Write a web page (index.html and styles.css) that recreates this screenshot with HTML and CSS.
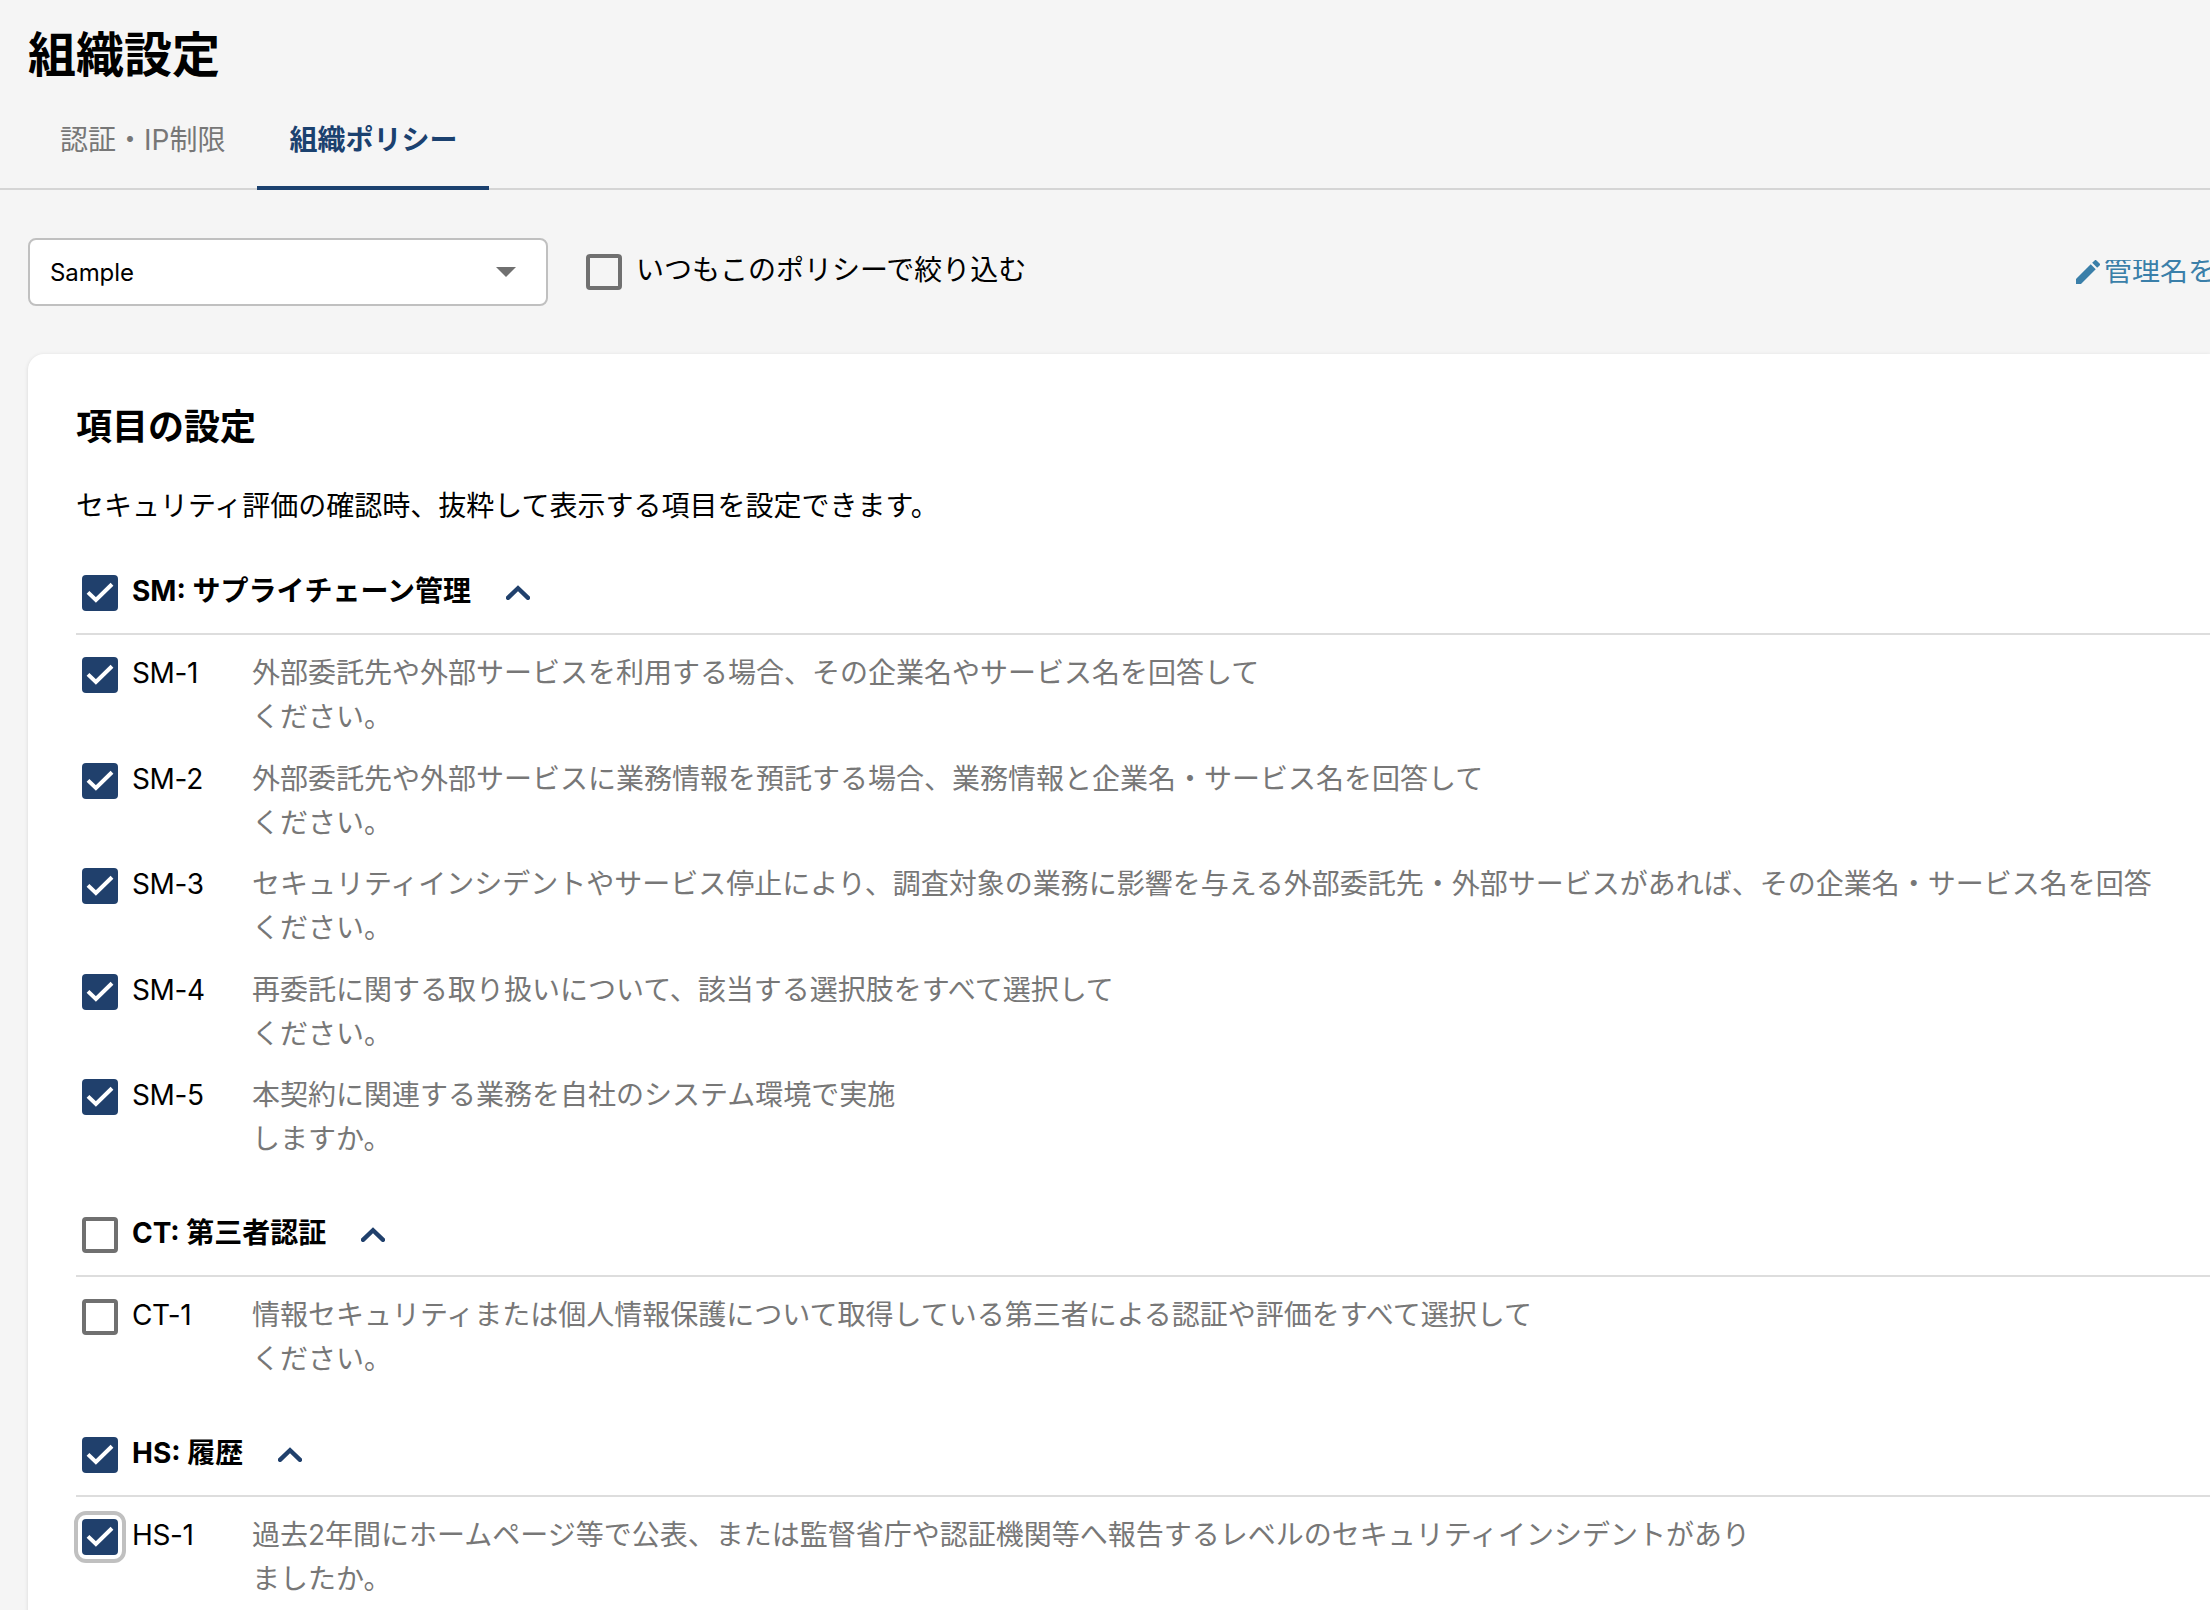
FILE: index.html
```html
<!DOCTYPE html>
<html lang="ja">
<head>
<meta charset="utf-8">
<title>組織設定</title>
<link rel="stylesheet" href="styles.css">
</head>
<body>
<svg class="defs" width="0" height="0">
  <symbol id="check" viewBox="0 0 36 36"><path d="M6 17.4l7.9 7.6L30 9.2" fill="none" stroke="#fff" stroke-width="4"/></symbol>
  <symbol id="chevron" viewBox="0 0 24 15"><path d="M2 12.8L12 3.2l10 9.6" fill="none" stroke="#20406c" stroke-width="4.4" stroke-linecap="round"/></symbol>
</svg>
<main class="page">
  <h1 class="page-title">組織設定</h1>
  <nav class="tabs">
    <a class="tab">認証・IP制限</a>
    <a class="tab tab-active">組織ポリシー</a>
  </nav>
  <div class="toolbar">
    <div class="select"><span class="select-value">Sample</span><svg width="20" height="10" viewBox="0 0 20 10"><path d="M0 0h20L10 10z" fill="#707070"/></svg></div>
    <label class="filter"><span class="box"></span><span class="filter-text">いつもこのポリシーで絞り込む</span></label>
    <a class="rename"><svg width="24" height="24" viewBox="3 3 18 18"><path fill="#3a7fa9" d="M3 17.25V21h3.75L17.81 9.94l-3.75-3.75L3 17.25zM20.71 7.04a1 1 0 0 0 0-1.41l-2.34-2.34a1 1 0 0 0-1.41 0l-1.83 1.83 3.75 3.75 1.83-1.83z"/></svg><span>管理名を</span></a>
  </div>
  <section class="card">
    <h2 class="card-title">項目の設定</h2>
    <p class="card-text">セキュリティ評価の確認時、抜粋して表示する項目を設定できます。</p>

    <div class="group">
      <header class="group-head"><span class="box checked"><svg><use href="#check"/></svg></span><h3 class="group-name">SM: サプライチェーン管理</h3><svg class="chevron"><use href="#chevron"/></svg></header>
      <div class="item"><span class="box checked"><svg><use href="#check"/></svg></span><span class="code">SM-1</span><p class="question">外部委託先や外部サービスを利用する場合、その企業名やサービス名を回答して<br>ください。</p></div>
      <div class="item"><span class="box checked"><svg><use href="#check"/></svg></span><span class="code">SM-2</span><p class="question">外部委託先や外部サービスに業務情報を預託する場合、業務情報と企業名・サービス名を回答して<br>ください。</p></div>
      <div class="item"><span class="box checked"><svg><use href="#check"/></svg></span><span class="code">SM-3</span><p class="question">セキュリティインシデントやサービス停止により、調査対象の業務に影響を与える外部委託先・外部サービスがあれば、その企業名・サービス名を回答<br>ください。</p></div>
      <div class="item"><span class="box checked"><svg><use href="#check"/></svg></span><span class="code">SM-4</span><p class="question">再委託に関する取り扱いについて、該当する選択肢をすべて選択して<br>ください。</p></div>
      <div class="item"><span class="box checked"><svg><use href="#check"/></svg></span><span class="code">SM-5</span><p class="question">本契約に関連する業務を自社のシステム環境で実施<br>しますか。</p></div>
    </div>

    <div class="group">
      <header class="group-head"><span class="box"></span><h3 class="group-name">CT: 第三者認証</h3><svg class="chevron"><use href="#chevron"/></svg></header>
      <div class="item"><span class="box"></span><span class="code">CT-1</span><p class="question">情報セキュリティまたは個人情報保護について取得している第三者による認証や評価をすべて選択して<br>ください。</p></div>
    </div>

    <div class="group">
      <header class="group-head"><span class="box checked"><svg><use href="#check"/></svg></span><h3 class="group-name">HS: 履歴</h3><svg class="chevron"><use href="#chevron"/></svg></header>
      <div class="item"><span class="box checked focused"><svg><use href="#check"/></svg></span><span class="code">HS-1</span><p class="question">過去2年間にホームページ等で公表、または監督省庁や認証機関等へ報告するレベルのセキュリティインシデントがあり<br>ましたか。</p></div>
    </div>
  </section>
</main>
</body>
</html>
```
FILE: styles.css
```css
* { box-sizing: border-box; margin: 0; padding: 0; }

body {
  height: 1610px;
  overflow: hidden;
  background: #f5f5f5;
  color: #000;
  font: 28px/44px Inter, "Noto Sans CJK JP", sans-serif;
  white-space: nowrap;
}

.defs { display: block; }
.page { display: flex; flex-direction: column; }

.page-title {
  height: 106px;
  padding: 19px 0 0 28px;
  font-size: 48px;
  line-height: 72px;
  font-weight: 700;
}

.tabs {
  display: flex;
  height: 84px;
  padding-left: 28px;
  border-bottom: 2px solid #d5d5d5;
}
.tab {
  height: 84px;
  padding: 12px 32px 0;
  color: #777;
}
.tab-active {
  border-bottom: 4px solid #1b416f;
  color: #1b416f;
  font-weight: 700;
}

.toolbar {
  display: flex;
  height: 164px;
  padding: 48px 0 0 28px;
}
.select {
  display: flex;
  align-items: center;
  justify-content: space-between;
  width: 520px;
  height: 68px;
  padding: 0 30px 0 20px;
  border: 2px solid #c0c0c0;
  border-radius: 8px;
  background: #fff;
  font-size: 24px;
}
.select-value { padding-top: 2px; letter-spacing: -0.1px; }
.filter { display: flex; margin: 16px 0 0 38px; }
.filter-text { margin: -6px 0 0 14px; }
.rename {
  display: flex;
  width: 134px;
  margin: 22px 0 0 auto;
  gap: 4px;
  overflow: hidden;
  color: #3a7fa9;
}
.rename svg { flex: none; }
.rename span { margin-top: -11px; }

.box {
  flex: none;
  width: 36px;
  height: 36px;
  border: 4px solid #707070;
  border-radius: 4px;
}
.checked { border: 0; background: #20406c; }
.checked svg { display: block; width: 36px; height: 36px; }
.focused { outline: 4px solid #c0c0c0; outline-offset: 4px; }

.card {
  height: 1300px;
  margin-left: 28px;
  padding: 46px 0 0 48px;
  border-radius: 16px 0 0 0;
  background: #fff;
  box-shadow: 0 1px 4px rgba(0, 0, 0, .12);
}
.card-title { height: 84px; font-size: 36px; line-height: 54px; font-weight: 700; }
.card-text { height: 85px; }

.group { margin-bottom: 48.2px; }
.group-head {
  display: flex;
  height: 66px;
  padding: 6px 0 0 6px;
  border-bottom: 2px solid #ddd;
}
.group-name { margin: -6px 0 0 14px; font-size: 28px; font-weight: 700; }
.chevron { width: 24px; height: 15px; margin: 10px 0 0 35px; }

.item { display: flex; height: 105.6px; padding: 22px 0 0 6px; }
.code { width: 120px; margin: -6px 0 0 14px; letter-spacing: -0.35px; }
.question { margin-top: -6px; color: #777; }
```
